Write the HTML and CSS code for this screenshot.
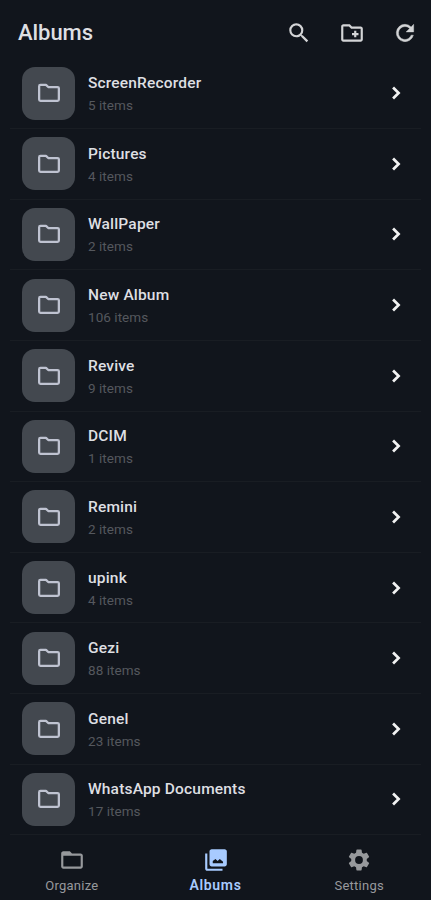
FILE: index.html
```
<!DOCTYPE html>
<html lang="en">
<head>
<meta charset="utf-8">
<title>Albums</title>
<link rel="stylesheet" href="styles.css">
</head>
<body>
<svg class="symbols" aria-hidden="true">
  <symbol id="folder" viewBox="0 0 24 24"><path d="M2.900 5.700a1.200 1.200 0 0 1 1.200-1.200h5.100l2.100 2h8.600a1.200 1.200 0 0 1 1.200 1.200v10.300a1.200 1.200 0 0 1-1.200 1.200H4.100a1.200 1.200 0 0 1-1.200-1.200z" fill="none" stroke="currentColor" stroke-width="2.100" stroke-linejoin="round"/></symbol>
  <symbol id="chevron" viewBox="0 0 24 24"><path d="M9.300 6.900l5.100 5.100-5.100 5.100" fill="none" stroke="currentColor" stroke-width="2.500"/></symbol>
</svg>
<div class="app">
  <header class="topbar">
    <h1>Albums</h1>
    <div class="actions">
      <svg viewBox="0 0 24 24"><path d="M15.5 14h-.79l-.28-.27A6.47 6.47 0 0 0 16 9.5 6.5 6.5 0 1 0 9.5 16c1.61 0 3.09-.59 4.23-1.57l.27.28v.79l5 4.99L20.49 19l-4.99-5zm-6 0C7.01 14 5 11.99 5 9.5S7.01 5 9.5 5 14 7.01 14 9.5 11.99 14 9.5 14z"/></svg>
      <svg viewBox="0 0 24 24"><path d="M20 6h-8l-2-2H4c-1.11 0-1.99.89-1.99 2L2 18c0 1.11.89 2 2 2h16c1.11 0 2-.89 2-2V8c0-1.11-.89-2-2-2zm0 12H4V6h5.17l2 2H20v10zm-8-4h2v2h2v-2h2v-2h-2v-2h-2v2h-2v2z"/></svg>
      <svg viewBox="0 0 24 24"><path d="M17.65 6.35A7.96 7.96 0 0 0 12 4a8 8 0 1 0 7.73 10h-2.08A6 6 0 1 1 12 6c1.66 0 3.14.69 4.22 1.78L13 11h7V4l-2.35 2.35z" stroke="currentColor" stroke-width=".4"/></svg>
    </div>
  </header>
  <main class="list">
    <div class="row"><div class="tile"><svg><use href="#folder"/></svg></div><div class="info"><h2>ScreenRecorder</h2><p>5 items</p></div><svg class="chev"><use href="#chevron"/></svg></div>
    <div class="row"><div class="tile"><svg><use href="#folder"/></svg></div><div class="info"><h2>Pictures</h2><p>4 items</p></div><svg class="chev"><use href="#chevron"/></svg></div>
    <div class="row"><div class="tile"><svg><use href="#folder"/></svg></div><div class="info"><h2>WallPaper</h2><p>2 items</p></div><svg class="chev"><use href="#chevron"/></svg></div>
    <div class="row"><div class="tile"><svg><use href="#folder"/></svg></div><div class="info"><h2>New Album</h2><p>106 items</p></div><svg class="chev"><use href="#chevron"/></svg></div>
    <div class="row"><div class="tile"><svg><use href="#folder"/></svg></div><div class="info"><h2>Revive</h2><p>9 items</p></div><svg class="chev"><use href="#chevron"/></svg></div>
    <div class="row"><div class="tile"><svg><use href="#folder"/></svg></div><div class="info"><h2>DCIM</h2><p>1 items</p></div><svg class="chev"><use href="#chevron"/></svg></div>
    <div class="row"><div class="tile"><svg><use href="#folder"/></svg></div><div class="info"><h2>Remini</h2><p>2 items</p></div><svg class="chev"><use href="#chevron"/></svg></div>
    <div class="row"><div class="tile"><svg><use href="#folder"/></svg></div><div class="info"><h2>upink</h2><p>4 items</p></div><svg class="chev"><use href="#chevron"/></svg></div>
    <div class="row"><div class="tile"><svg><use href="#folder"/></svg></div><div class="info"><h2>Gezi</h2><p>88 items</p></div><svg class="chev"><use href="#chevron"/></svg></div>
    <div class="row"><div class="tile"><svg><use href="#folder"/></svg></div><div class="info"><h2>Genel</h2><p>23 items</p></div><svg class="chev"><use href="#chevron"/></svg></div>
    <div class="row"><div class="tile"><svg><use href="#folder"/></svg></div><div class="info"><h2>WhatsApp Documents</h2><p>17 items</p></div><svg class="chev"><use href="#chevron"/></svg></div>
  </main>
  <nav class="tabs">
    <a class="tab"><svg viewBox="0 0 24 24"><path d="M20 6h-8l-2-2H4c-1.1 0-1.99.9-1.99 2L2 18c0 1.1.9 2 2 2h16c1.1 0 2-.9 2-2V8c0-1.1-.9-2-2-2zm0 12H4V8h16v10z"/></svg><span>Organize</span></a>
    <a class="tab active"><svg viewBox="0 0 24 24"><path d="M22 16V4c0-1.1-.9-2-2-2H8c-1.100 0-2 .9-2 2v12c0 1.100.9 2 2 2h12c1.100 0 2-.9 2-2zM9 15v-2l2.500-2 2 2 2-2 3 2.500V15zM2 6v14c0 1.100.9 2 2 2h14v-2H4V6H2z"/></svg><span>Albums</span></a>
    <a class="tab"><svg viewBox="0 0 24 24"><path d="M19.140 12.940c.04-.3.06-.61.06-.94 0-.32-.02-.64-.07-.94l2.030-1.580a.49.49 0 0 0 .12-.61l-1.920-3.320a.49.49 0 0 0-.59-.22l-2.390.96c-.5-.38-1.030-.7-1.620-.94l-.36-2.540a.48.48 0 0 0-.48-.41h-3.840a.48.48 0 0 0-.47.41l-.36 2.540c-.59.24-1.130.57-1.620.94l-2.390-.96a.48.48 0 0 0-.59.22L2.740 8.870a.48.48 0 0 0 .12.610l2.030 1.580c-.05.3-.09.63-.09.94s.02.64.07.94l-2.030 1.580a.49.49 0 0 0-.12.610l1.920 3.320c.12.220.37.290.59.220l2.390-.96c.5.380 1.030.7 1.620.94l.36 2.540c.05.240.24.410.48.410h3.840c.24 0 .44-.17.47-.41l.36-2.540c.59-.24 1.130-.56 1.620-.94l2.390.96c.22.080.47 0 .59-.22l1.920-3.320a.48.48 0 0 0-.12-.61l-2.010-1.580zM12 15.600A3.600 3.600 0 1 1 12 8.400a3.600 3.600 0 0 1 0 7.200z"/></svg><span>Settings</span></a>
  </nav>
</div>
</body>
</html>
```
FILE: styles.css
```
* { box-sizing: border-box; margin: 0; padding: 0; }
body { background: #11151c; font-family: Roboto, sans-serif; color: #dedfe2; overflow: hidden; }
svg { display: block; fill: currentColor; }
.symbols { width: 0; height: 0; position: absolute; }
.app { height: 900px; display: flex; flex-direction: column; }
.topbar { height: 58.400px; padding: 8px 13.500px 0 18px; display: flex; align-items: center; justify-content: space-between; flex: none; }
h1 { font-size: 22px; line-height: 28px; font-weight: 500; letter-spacing: -.05px; }
.actions { display: flex; gap: 27px; }
.actions svg { width: 26px; height: 26px; color: #d3d4d6; }
.list { padding: 0 10px; flex: none; }
.row { height: 70.640px; padding: 0 12px; display: flex; align-items: center; border-bottom: 1px solid #191d23; }
.tile { width: 53px; height: 53px; border-radius: 13px; background: #43484f; color: #bfc3d1; display: grid; place-items: center; flex: none; }
.tile svg { width: 26px; height: 26px; }
.info { flex: 1; margin-left: 13px; padding-top: 2px; }
h2 { font-size: 15.500px; line-height: 22px; font-weight: 500; letter-spacing: .18px; }
.info p { font-size: 13.500px; line-height: 22px; color: #55585e; letter-spacing: .05px; }
.chev { width: 26px; height: 26px; color: #f2f2f2; flex: none; }
.tabs { flex: 1; display: flex; padding-top: 12px; }
.tab { flex: 1; display: flex; flex-direction: column; align-items: center; color: #97999c; font-size: 13px; }
.tab svg { width: 26px; height: 26px; }
.tab span { line-height: 20px; margin-top: 3px; letter-spacing: .25px; }
.tab.active { color: #a8cbff; font-size: 14px; font-weight: 600; }
.tab.active span { margin-top: 2px; letter-spacing: .7px; }
```
